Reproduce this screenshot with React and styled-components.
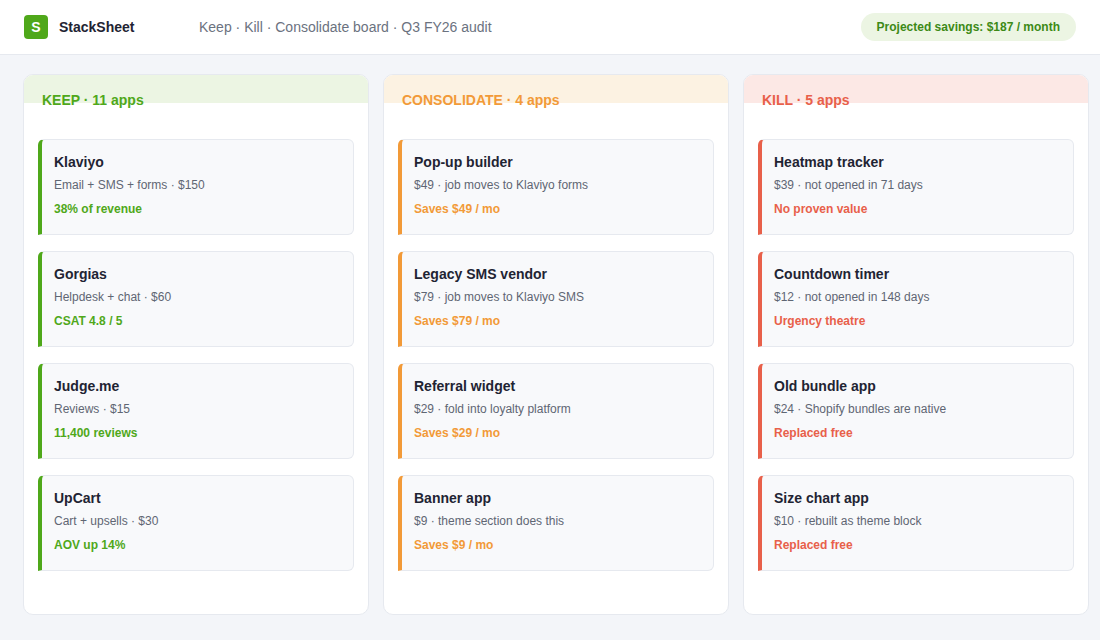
import React from "react";
import styled, { createGlobalStyle } from "styled-components";

const Global = createGlobalStyle`
  body { margin:0; background:#f3f5f9; font-family:"Liberation Sans", Arial, sans-serif; }
`;
const Top = styled.header`
  height:55px; background:#fff; border-bottom:1px solid #e6e9ef;
  display:flex; align-items:center; padding:0 24px; box-sizing:border-box;
`;
const Logo = styled.div`
  width:24px; height:24px; border-radius:4px; background:#4fa81a; color:#fff;
  font-weight:700; font-size:14px; display:flex; align-items:center; justify-content:center;
`;
const Brand = styled.div`font-weight:700; font-size:14px; color:#1f2433; margin-left:11px; width:140px;`;
const Sub = styled.div`font-size:14px; color:#6b7280; flex:1;`;
const Pill = styled.div`
  background:#ecf5e3; color:#3d8a16; font-weight:700; font-size:12px;
  padding:0 16px; height:28px; border-radius:14px; display:flex; align-items:center;
`;
const Board = styled.main`
  display:grid; grid-template-columns:repeat(3,346px); gap:14px; padding:19px 0 0 23px;
`;
const Col = styled.section`
  height:541px; background:#fff; border:1px solid #e6e9ef; border-radius:10px; box-sizing:border-box; overflow:hidden;
`;
const ColHead = styled.div`
  height:28px; background:${p=>p.bg}; color:${p=>p.c}; font-weight:700; font-size:14px;
  padding:17px 18px 0; box-sizing:border-box; line-height:16px; position:relative; z-index:0;
`;
const ColBody = styled.div`
  padding:36px 14px 14px; display:flex; flex-direction:column; gap:16px;
`;
const Card = styled.div`
  height:96px; box-sizing:border-box; background:#f8f9fb; border:1px solid #e6e9ef;
  border-left:4px solid ${p=>p.c}; border-radius:6px 6px 6px 0; padding:13px 12px 0;
  display:flex; flex-direction:column;
`;
const Title = styled.div`font-weight:700; font-size:14px; color:#1f2433; line-height:18px;`;
const Meta = styled.div`font-size:12px; color:#5f6673; margin-top:6px; line-height:16px;`;
const Note = styled.div`font-size:12px; font-weight:700; color:${p=>p.c}; margin-top:8px; line-height:16px;`;

const cols = [
  {h:"KEEP · 11 apps", c:"#4fa81a", bg:"#ecf5e3", items:[
    ["Klaviyo","Email + SMS + forms · $150","38% of revenue"],
    ["Gorgias","Helpdesk + chat · $60","CSAT 4.8 / 5"],
    ["Judge.me","Reviews · $15","11,400 reviews"],
    ["UpCart","Cart + upsells · $30","AOV up 14%"]]},
  {h:"CONSOLIDATE · 4 apps", c:"#f29a38", bg:"#fcf2e2", items:[
    ["Pop-up builder","$49 · job moves to Klaviyo forms","Saves $49 / mo"],
    ["Legacy SMS vendor","$79 · job moves to Klaviyo SMS","Saves $79 / mo"],
    ["Referral widget","$29 · fold into loyalty platform","Saves $29 / mo"],
    ["Banner app","$9 · theme section does this","Saves $9 / mo"]]},
  {h:"KILL · 5 apps", c:"#e8604a", bg:"#fce8e5", items:[
    ["Heatmap tracker","$39 · not opened in 71 days","No proven value"],
    ["Countdown timer","$12 · not opened in 148 days","Urgency theatre"],
    ["Old bundle app","$24 · Shopify bundles are native","Replaced free"],
    ["Size chart app","$10 · rebuilt as theme block","Replaced free"]]},
];

export default function App(){
  return (<>
    <Global/>
    <Top>
      <Logo>S</Logo>
      <Brand>StackSheet</Brand>
      <Sub>Keep · Kill · Consolidate board · Q3 FY26 audit</Sub>
      <Pill>Projected savings: $187 / month</Pill>
    </Top>
    <Board>
      {cols.map(col=>(
        <Col key={col.h}>
          <ColHead bg={col.bg} c={col.c}>{col.h}</ColHead>
          <ColBody>
            {col.items.map(([t,m,n])=>(
              <Card key={t} c={col.c}>
                <Title>{t}</Title><Meta>{m}</Meta><Note c={col.c}>{n}</Note>
              </Card>
            ))}
          </ColBody>
        </Col>
      ))}
    </Board>
  </>);
}
